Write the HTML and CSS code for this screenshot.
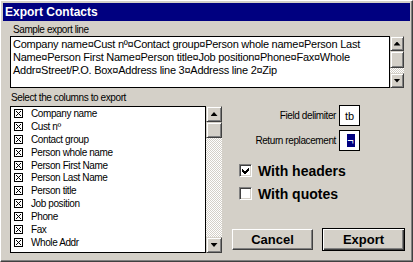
FILE: index.html
```html
<!DOCTYPE html>
<html lang="en">
<head>
    <meta charset="UTF-8" />
    <title>Export Contacts</title>
    <link rel="stylesheet" href="styles.css">
</head>
<body>
<div class="dialog">
    <div class="dialog__title">Export Contacts</div>
    <div class="dialog__body">
        <div class="label label--sample">Sample export line</div>
        <div class="sample">
            <div class="sample__text">Company name¤Cust nº¤Contact group¤Person whole name¤Person Last<br>Name¤Person First Name¤Person title¤Job position¤Phone¤Fax¤Whole<br>Addr¤Street/P.O. Box¤Address line 3¤Address line 2¤Zip</div>
            <div class="scrollbar scrollbar--sample">
                <div class="scrollbar__btn scrollbar__btn--up"></div>
                <div class="scrollbar__thumb"></div>
                <div class="scrollbar__track"></div>
                <div class="scrollbar__btn scrollbar__btn--down"></div>
            </div>
        </div>

        <div class="lower">
            <div class="columns">
                <div class="label label--list">Select the columns to export</div>
                <div class="columns__box">
                    <ul class="columns__list">
                        <li><svg class="xbox" width="9" height="9" viewBox="0 0 9 9"><path d="M.5 .5h8v8h-8z M2 2L7 7M7 2L2 7" /></svg>Company name</li>
                        <li><svg class="xbox" width="9" height="9" viewBox="0 0 9 9"><path d="M.5 .5h8v8h-8z M2 2L7 7M7 2L2 7" /></svg>Cust nº</li>
                        <li><svg class="xbox" width="9" height="9" viewBox="0 0 9 9"><path d="M.5 .5h8v8h-8z M2 2L7 7M7 2L2 7" /></svg>Contact group</li>
                        <li><svg class="xbox" width="9" height="9" viewBox="0 0 9 9"><path d="M.5 .5h8v8h-8z M2 2L7 7M7 2L2 7" /></svg>Person whole name</li>
                        <li><svg class="xbox" width="9" height="9" viewBox="0 0 9 9"><path d="M.5 .5h8v8h-8z M2 2L7 7M7 2L2 7" /></svg>Person First Name</li>
                        <li><svg class="xbox" width="9" height="9" viewBox="0 0 9 9"><path d="M.5 .5h8v8h-8z M2 2L7 7M7 2L2 7" /></svg>Person Last Name</li>
                        <li><svg class="xbox" width="9" height="9" viewBox="0 0 9 9"><path d="M.5 .5h8v8h-8z M2 2L7 7M7 2L2 7" /></svg>Person title</li>
                        <li><svg class="xbox" width="9" height="9" viewBox="0 0 9 9"><path d="M.5 .5h8v8h-8z M2 2L7 7M7 2L2 7" /></svg>Job position</li>
                        <li><svg class="xbox" width="9" height="9" viewBox="0 0 9 9"><path d="M.5 .5h8v8h-8z M2 2L7 7M7 2L2 7" /></svg>Phone</li>
                        <li><svg class="xbox" width="9" height="9" viewBox="0 0 9 9"><path d="M.5 .5h8v8h-8z M2 2L7 7M7 2L2 7" /></svg>Fax</li>
                        <li><svg class="xbox" width="9" height="9" viewBox="0 0 9 9"><path d="M.5 .5h8v8h-8z M2 2L7 7M7 2L2 7" /></svg>Whole Addr</li>
                    </ul>
                    <div class="scrollbar scrollbar--list">
                        <div class="scrollbar__btn scrollbar__btn--up"></div>
                        <div class="scrollbar__thumb"></div>
                        <div class="scrollbar__track"></div>
                        <div class="scrollbar__btn scrollbar__btn--down"></div>
                    </div>
                </div>
            </div>

            <div class="options">
                <div class="field-row">
                    <span>Field delimiter</span>
                    <div class="small-field">tb</div>
                </div>
                <div class="field-row">
                    <span>Return replacement</span>
                    <div class="small-field"><span class="small-field__sel">¬</span></div>
                </div>

                <div class="check check--first">
                    <span class="check__box"><svg width="7" height="7" viewBox="0 0 7 7"><path d="M0 2v3l2 2h1l4-4V0L2.5 4.5z" /></svg></span>
                    With headers
                </div>
                <div class="check">
                    <span class="check__box"></span>
                    With quotes
                </div>

                <div class="buttons">
                    <button class="btn">Cancel</button>
                    <button class="btn btn--default">Export</button>
                </div>
            </div>
        </div>
    </div>
</div>
</body>
</html>
```

FILE: styles.css
```css
*,
*::before,
*::after {
    box-sizing: border-box;
}

html,
body {
    margin: 0;
    padding: 0;
}

body {
    background: #fff;
    font-family: "Liberation Sans", Arial, sans-serif;
    color: #000;
}

.dialog {
    width: 413px;
    height: 262px;
    background: #d4d0c8;
    border: 1px solid;
    border-color: #fff #404040 #404040 #fff;
    box-shadow: inset -1px -1px #808080;
    padding: 2px;
    display: flex;
    flex-direction: column;
    overflow: hidden;
}

.dialog__title {
    height: 18px;
    flex: none;
    background: #000080;
    color: #fff;
    font-weight: bold;
    font-size: 12px;
    line-height: 18px;
    padding-left: 2px;
}

.dialog__body {
    flex: 1;
    padding: 3px 0 0 7px;
}

.label {
    height: 12px;
    font-size: 10px;
    line-height: 12px;
    letter-spacing: -0.4px;
    white-space: nowrap;
}
.label--sample {
    padding-left: 3px;
}
.label--list {
    padding-left: 1px;
}

/* sample line */
.sample {
    display: flex;
    height: 52px;
}
.sample__text {
    width: 380px;
    height: 52px;
    border: 1px solid #000;
    background: #fff;
    font-size: 11px;
    line-height: 13px;
    letter-spacing: -0.25px;
    padding: 1px 0 0 2px;
    white-space: nowrap;
    overflow: hidden;
}

/* scrollbars */
.scrollbar {
    display: flex;
    flex-direction: column;
    flex: none;
}
.scrollbar--sample {
    width: 14px;
}
.scrollbar--list {
    width: 16px;
}
.scrollbar__btn,
.scrollbar__thumb {
    flex: none;
    background: #d4d0c8;
    border: 1px solid;
    border-color: #d4d0c8 #404040 #404040 #d4d0c8;
    box-shadow: inset 1px 1px #fff, inset -1px -1px #808080;
    display: flex;
    align-items: center;
    justify-content: center;
}
.scrollbar__btn {
    height: 15px;
}
.scrollbar__btn::before {
    content: "";
    width: 7px;
    height: 4px;
    background: #000;
}
.scrollbar__btn--up::before {
    clip-path: polygon(50% 0, 100% 100%, 0 100%);
}
.scrollbar__btn--down::before {
    clip-path: polygon(0 0, 100% 0, 50% 100%);
}
.scrollbar__thumb {
    height: 17px;
}
.scrollbar__track {
    flex: 1;
    background: repeating-conic-gradient(#fff 0 25%, #d4d0c8 0 50%) 0 0 / 2px 2px;
}
.scrollbar--list .scrollbar__btn {
    height: 16px;
}
.scrollbar--list .scrollbar__thumb {
    height: 16px;
}

/* lower part */
.lower {
    display: flex;
    margin-top: 4px;
}
.columns {
    width: 212px;
    flex: none;
}
.columns__box {
    display: flex;
    margin-top: 2px;
    height: 147px;
}
.columns__list {
    width: 196px;
    margin: 0;
    padding: 0 0 0 3px;
    list-style: none;
    border: 1px solid #000;
    background: #fff;
    font-size: 10px;
    letter-spacing: -0.4px;
    overflow: hidden;
}
.columns__list li {
    display: flex;
    align-items: center;
    height: 12.9px;
    white-space: nowrap;
}
.xbox {
    flex: none;
    margin-right: 8px;
    fill: none;
    stroke: #000;
    shape-rendering: crispEdges;
}

/* options */
.options {
    flex: 1;
    display: flex;
    flex-direction: column;
    padding-top: 13px;
}
.field-row {
    display: flex;
    align-items: center;
    justify-content: flex-end;
    gap: 3px;
    height: 21px;
    padding-right: 50px;
    font-size: 10px;
    letter-spacing: -0.4px;
    white-space: nowrap;
}
.field-row + .field-row {
    margin-top: 4px;
}
.small-field {
    width: 21px;
    height: 21px;
    border: 1px solid #000;
    background: #fff;
    display: flex;
    align-items: center;
    justify-content: center;
    font-size: 11px;
    letter-spacing: 0;
}
.small-field__sel {
    display: block;
    width: 8px;
    height: 13px;
    margin-left: 2px;
    background: #000080;
    color: #fff;
    line-height: 13px;
    text-align: center;
}

.check {
    display: flex;
    align-items: center;
    gap: 6px;
    height: 17px;
    padding-left: 17px;
    font-size: 14px;
    font-weight: bold;
    margin-top: 6px;
}
.check--first {
    margin-top: 11px;
}
.check__box {
    width: 13px;
    height: 13px;
    flex: none;
    background: #fff;
    border: 1px solid;
    border-color: #808080 #fff #fff #808080;
    box-shadow: inset 1px 1px #404040, inset -1px -1px #d4d0c8;
    display: flex;
    align-items: center;
    justify-content: center;
}
.check__box svg {
    fill: #000;
    shape-rendering: crispEdges;
}

.buttons {
    display: flex;
    align-items: center;
    gap: 9px;
    margin-top: 26px;
    padding-left: 10px;
}
.btn {
    width: 81px;
    height: 21px;
    padding: 0;
    font-family: "Liberation Sans", Arial, sans-serif;
    font-size: 13px;
    font-weight: bold;
    color: #000;
    background: #d4d0c8;
    border: 1px solid;
    border-color: #fff #404040 #404040 #fff;
    box-shadow: inset -1px -1px #808080;
}
.btn--default {
    width: 83px;
    height: 23px;
    border: 1px solid #000;
    box-shadow: inset 1px 1px #fff, inset -1px -1px #404040, inset -2px -2px #808080;
}
```
